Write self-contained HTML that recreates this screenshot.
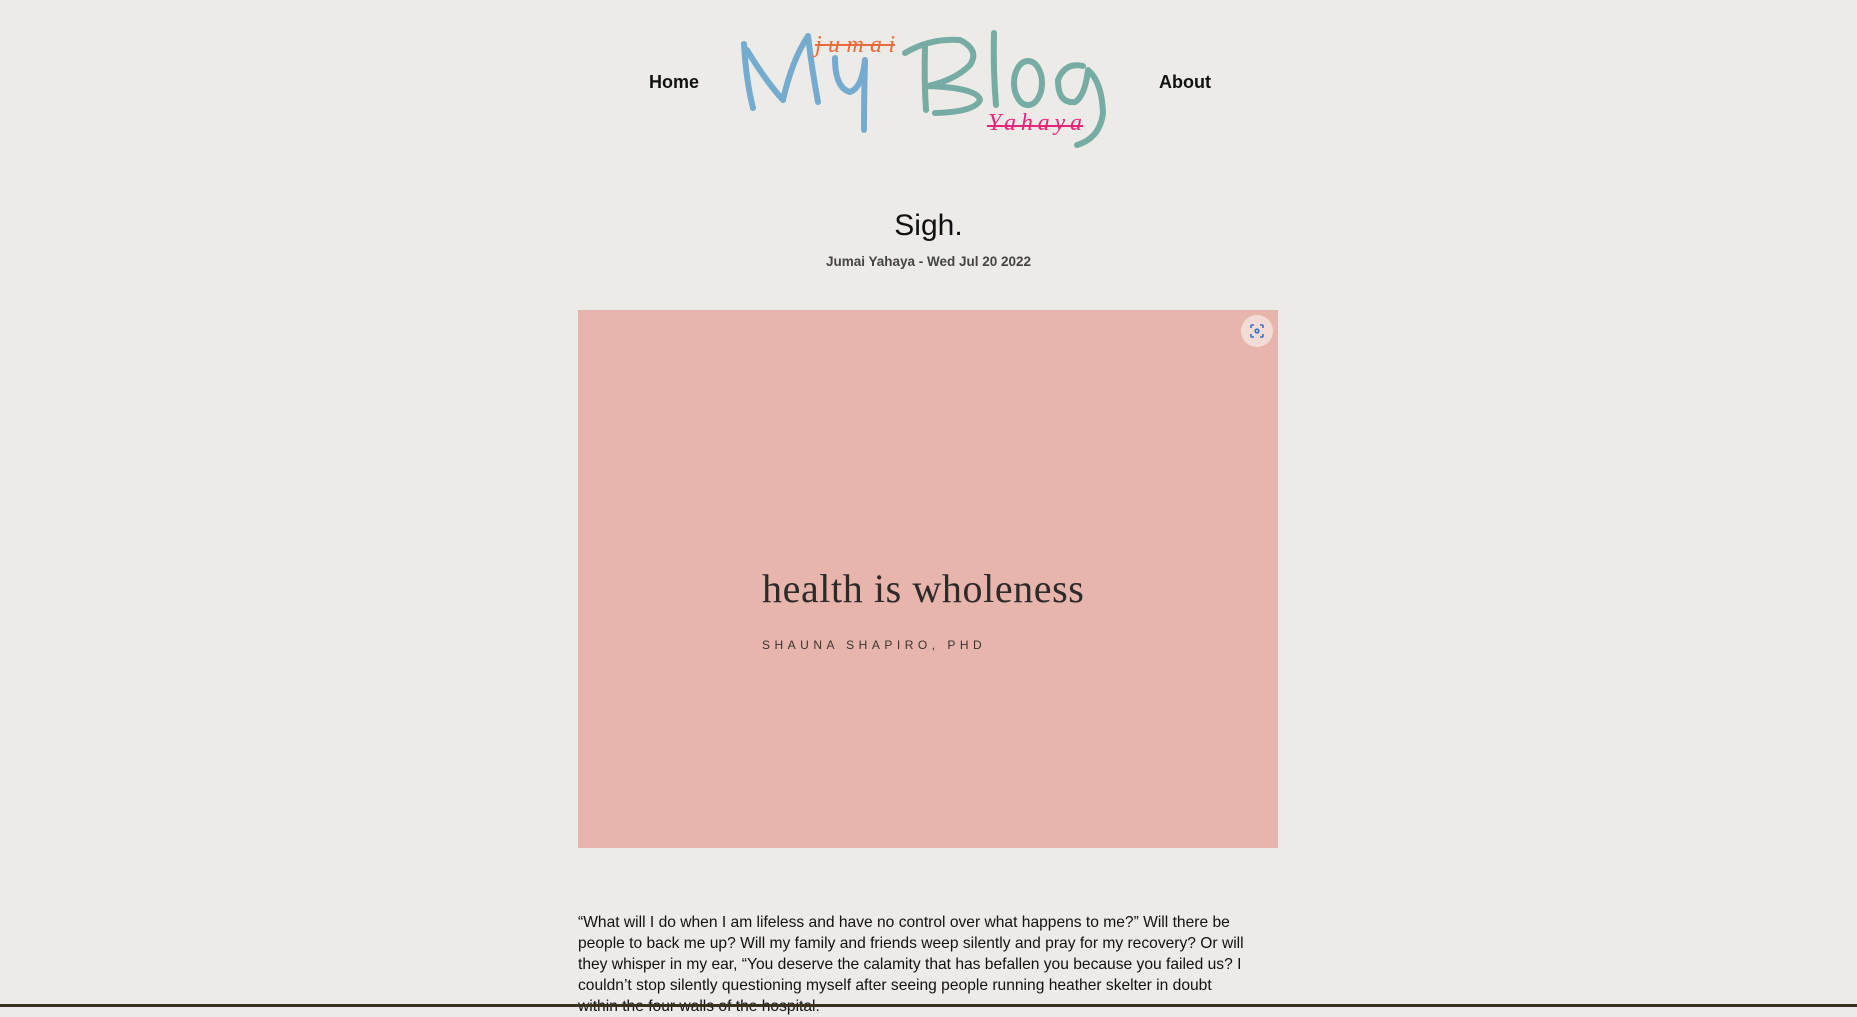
<!DOCTYPE html>
<html><head><meta charset="utf-8"><style>
body{margin:0;background:#edebe8;width:1857px;height:1007px;overflow:hidden;position:relative;font-family:"Liberation Sans",sans-serif;color:#111}
.nav{position:absolute;top:72px;font-size:18px;font-weight:bold}
.t{position:absolute;width:100%;text-align:center}
.img{position:absolute;left:578px;top:310px;width:700px;height:538px;background:#e7b5ac}
.body{position:absolute;left:578px;top:912px;width:668px;font-size:15.6px;line-height:21px;color:#111}
</style></head><body>
<div class="nav" style="left:649px">Home</div>
<div class="nav" style="left:1159px">About</div>
<svg style="position:absolute;left:0;top:0" width="1857" height="170" viewBox="0 0 1857 170">
<g fill="none" stroke-linecap="round" stroke-linejoin="round" stroke-width="6">
<path d="M744 44 Q746 80 753 108 M747 50 Q765 80 783 100 Q792 60 808 36 Q812 70 818 102" stroke="#74abcf"/>
<path d="M835 58 Q835 88 850 92 Q862 88 865 60 Q864 100 864 130" stroke="#74abcf"/>
<path d="M905 53 Q930 38 960 40 Q980 50 970 65 Q955 80 928 86 Q978 88 980 100 Q975 112 935 113 M925 47 Q924 80 926 110" stroke="#76aca3"/>
<path d="M994 33 Q993 70 996 105" stroke="#76aca3"/>
<ellipse cx="1028" cy="83" rx="14" ry="22" stroke="#76aca3"/>
<path d="M1083 66 Q1065 62 1058 80 Q1058 104 1075 102 Q1085 96 1088 70 Q1102 82 1103 113 Q1100 138 1077 145" stroke="#76aca3"/>
</g>
<text x="815" y="52" font-family="Liberation Serif,serif" font-style="italic" font-size="24" fill="#eb6a3c" textLength="80">jumai</text>
<path d="M815 45 L895 45" stroke="#eb6a3c" stroke-width="2"/>
<text x="988" y="130" font-family="Liberation Serif,serif" font-style="italic" font-size="24" fill="#e5267a" textLength="94">Yahaya</text>
<path d="M987 126 L1083 126" stroke="#e5267a" stroke-width="2"/>
</svg>
<div class="t" style="top:209px;font-size:30px">Sigh.</div>
<div class="t" style="top:254px;font-size:13.5px;font-weight:bold;color:#444">Jumai Yahaya - Wed Jul 20 2022</div>
<div class="img">
<div style="position:absolute;left:184px;top:256px;font-family:'Liberation Serif',serif;font-size:40px;letter-spacing:0.6px;color:#2d2a2a;line-height:46px">health is wholeness</div>
<div style="position:absolute;left:184px;top:328px;font-size:12px;letter-spacing:4.5px;color:#3a3333">SHAUNA SHAPIRO, PHD</div>
<div style="position:absolute;left:663px;top:5px;width:32px;height:32px;border-radius:50%;background:#f3dcd6">
<svg width="32" height="32" viewBox="0 0 32 32" fill="none" stroke="#2f6fd0" stroke-width="1.6"><path d="M10 13V11Q10 10 11 10H13M19 10H21Q22 10 22 11V13M22 19V21Q22 22 21 22H19M13 22H11Q10 22 10 21V19"/><circle cx="16" cy="16" r="1.8"/></svg></div>
</div>
<div class="body">“What will I do when I am lifeless and have no control over what happens to me?” Will there be people to back me up? Will my family and friends weep silently and pray for my recovery? Or will they whisper in my ear, “You deserve the calamity that has befallen you because you failed us? I couldn’t stop silently questioning myself after seeing people running heather skelter in doubt within the four walls of the hospital.</div>
<div style="position:absolute;left:0;top:1004px;width:1857px;height:3px;background:#3b2f1f"></div>
</body></html>
